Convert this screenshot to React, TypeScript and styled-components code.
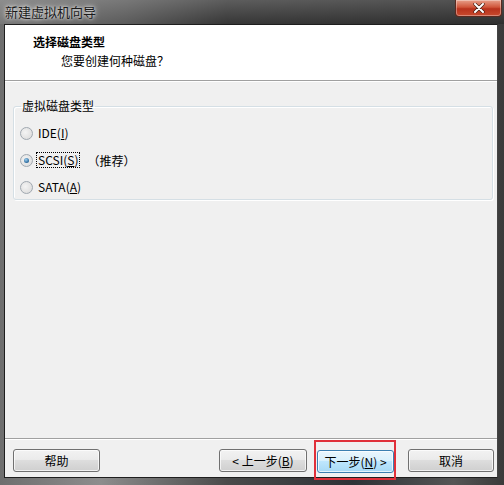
import React from "react";
import styled, { createGlobalStyle } from "styled-components";

const Global = createGlobalStyle`
  html, body { margin: 0; padding: 0; background: #2b2b2b; }
  body { font-family: "Noto Sans CJK SC", "Liberation Sans", sans-serif; font-size: 12px; color: #000; }
`;

const Win = styled.div`
  width: 504px;
  height: 485px;
  display: flex;
  flex-direction: column;
  background: linear-gradient(90deg, #6e6e6e 0%, #8d8d8d 20%, #4a4a4a 45%, #2e3236 70%, #555 90%, #3a3a3a 100%);
  overflow: hidden;
`;

const TitleBar = styled.div`
  height: 24px;
  flex: none;
  display: flex;
  align-items: flex-start;
  justify-content: space-between;
  background: linear-gradient(90deg, rgba(170,170,170,0.55) 0%, rgba(140,140,140,0.4) 25%, rgba(40,40,40,0.2) 45%, rgba(20,20,20,0.3) 100%),
    linear-gradient(180deg, #6a6a6a 0%, #3a3a3a 100%);
`;

const TitleText = styled.div`
  padding: 3px 0 0 5px;
  font-size: 13px;
  line-height: 17px;
  color: #1a1a1a;
  text-shadow: 0 0 6px rgba(255,255,255,0.9), 0 0 3px rgba(255,255,255,0.8);
`;

const CloseBtn = styled.div`
  width: 45px;
  height: 16px;
  margin-right: 2px;
  border: 1px solid #5a2a20;
  border-top: none;
  border-radius: 0 0 4px 4px;
  background: linear-gradient(180deg, #e8a08a 0%, #d0553a 45%, #b8321c 55%, #c84a2e 100%);
  display: flex;
  align-items: center;
  justify-content: center;
  box-shadow: inset 0 0 0 1px rgba(255,255,255,0.35);
`;

const Client = styled.div`
  flex: 1;
  margin: 0 6px 7px 4px;
  display: flex;
  flex-direction: column;
  background: #f0f0f0;
  border: 1px solid #1e1e1e;
  border-right-color: #444;
`;

const Header = styled.div`
  height: 56px;
  flex: none;
  background: #fff;
  border-bottom: 1px solid #a0a0a0;
  box-shadow: 0 1px 0 #fff;
  padding: 9px 0 0 28px;
  box-sizing: border-box;
`;

const HeaderTitle = styled.div`
  font-weight: bold;
  font-size: 12px;
  line-height: 16px;
`;

const HeaderSub = styled.div`
  font-size: 12px;
  line-height: 16px;
  margin: 3px 0 0 28px;
`;

const Body = styled.div`
  flex: 1;
  padding: 17px 4px 0 8px;
  display: flex;
  flex-direction: column;
`;

const Group = styled.fieldset`
  margin: 0;
  padding: 11px 0 5px 6px;
  height: 102px;
  box-sizing: border-box;
  border: 1px solid #d5dfe5;
  border-radius: 3px;
  box-shadow: inset 1px 1px 0 #fff, 1px 1px 0 #fff;
  display: flex;
  flex-direction: column;
  gap: 11px;
`;

const Legend = styled.legend`
  padding: 0 1px;
  margin-left: 1px;
  font-size: 12px;
  line-height: 16px;
`;

const RadioRow = styled.label`
  display: flex;
  align-items: center;
  height: 16px;
  gap: 4px;
`;

const RadioDot = styled.span<{ $on?: boolean }>`
  width: 11px;
  height: 11px;
  border-radius: 50%;
  border: 1px solid #a0a8b0;
  background: radial-gradient(circle at 40% 40%, #f4f4f4 0%, #d8d8d8 100%);
  display: flex;
  align-items: center;
  justify-content: center;
  flex: none;
  &::after {
    content: "";
    width: 5px;
    height: 5px;
    border-radius: 50%;
    background: ${p => (p.$on ? "radial-gradient(circle at 40% 35%, #9ed0f0 0%, #1a5a90 80%)" : "transparent")};
  }
`;

const RadioLabel = styled.span<{ $focus?: boolean }>`
  font-size: 12px;
  line-height: 14px;
  padding: 0 1px;
  outline: ${p => (p.$focus ? "1px dotted #000" : "none")};
`;

const Note = styled.span`
  margin-left: 4px;
`;

const U = styled.span`
  text-decoration: underline;
`;

const Footer = styled.div`
  flex: none;
  border-top: 1px solid #a0a0a0;
  box-shadow: inset 0 1px 0 #fff;
  height: 39px;
  box-sizing: border-box;
  padding: 10px 3px 0 8px;
  display: flex;
  align-items: flex-start;
`;

const Btn = styled.button<{ $hot?: boolean; $w?: number }>`
  width: ${p => p.$w ?? 87}px;
  height: 23px;
  flex: none;
  box-sizing: border-box;
  border: 1px solid ${p => (p.$hot ? "#3c7fb1" : "#707070")};
  border-radius: 3px;
  background: ${p =>
    p.$hot
      ? "linear-gradient(180deg, #eaf6fd 0%, #d9f0fc 45%, #bee6fd 50%, #a7d9f5 100%)"
      : "linear-gradient(180deg, #f2f2f2 0%, #ebebeb 45%, #dddddd 50%, #cfcfcf 100%)"};
  box-shadow: inset 0 0 0 1px rgba(255,255,255,0.7);
  font-family: "Noto Sans CJK SC", "Liberation Sans", sans-serif;
  font-size: 12px;
  line-height: 14px;
  color: #000;
  padding: 0;
`;

const Spacer = styled.div`
  flex: 1;
`;

const NextWrap = styled.div`
  flex: none;
  margin: -9px 12px 0 7px;
  padding: 8px 0 5px 1px;
  border: 2px solid #e0303a;
`;

export default function App() {
  return (
    <>
      <Global />
      <Win>
        <TitleBar>
          <TitleText>新建虚拟机向导</TitleText>
          <CloseBtn>
            <svg width="12" height="10" viewBox="0 0 12 10">
              <path d="M2 1 L10 9 M10 1 L2 9" stroke="#3a1a10" strokeWidth="3.2" strokeLinecap="round" />
              <path d="M2 1 L10 9 M10 1 L2 9" stroke="#fff" strokeWidth="2" strokeLinecap="round" />
            </svg>
          </CloseBtn>
        </TitleBar>
        <Client>
          <Header>
            <HeaderTitle>选择磁盘类型</HeaderTitle>
            <HeaderSub>您要创建何种磁盘？</HeaderSub>
          </Header>
          <Body>
            <Group>
              <Legend>虚拟磁盘类型</Legend>
              <RadioRow>
                <RadioDot />
                <RadioLabel>IDE(<U>I</U>)</RadioLabel>
              </RadioRow>
              <RadioRow>
                <RadioDot $on />
                <RadioLabel $focus>SCSI(<U>S</U>)</RadioLabel>
                <Note>（推荐）</Note>
              </RadioRow>
              <RadioRow>
                <RadioDot />
                <RadioLabel>SATA(<U>A</U>)</RadioLabel>
              </RadioRow>
            </Group>
          </Body>
          <Footer>
            <Btn $w={87}>帮助</Btn>
            <Spacer />
            <Btn $w={88}>&lt; 上一步(<U>B</U>)</Btn>
            <NextWrap>
              <Btn $hot $w={77}>下一步(<U>N</U>) &gt;</Btn>
            </NextWrap>
            <Btn $w={86}>取消</Btn>
          </Footer>
        </Client>
      </Win>
    </>
  );
}
